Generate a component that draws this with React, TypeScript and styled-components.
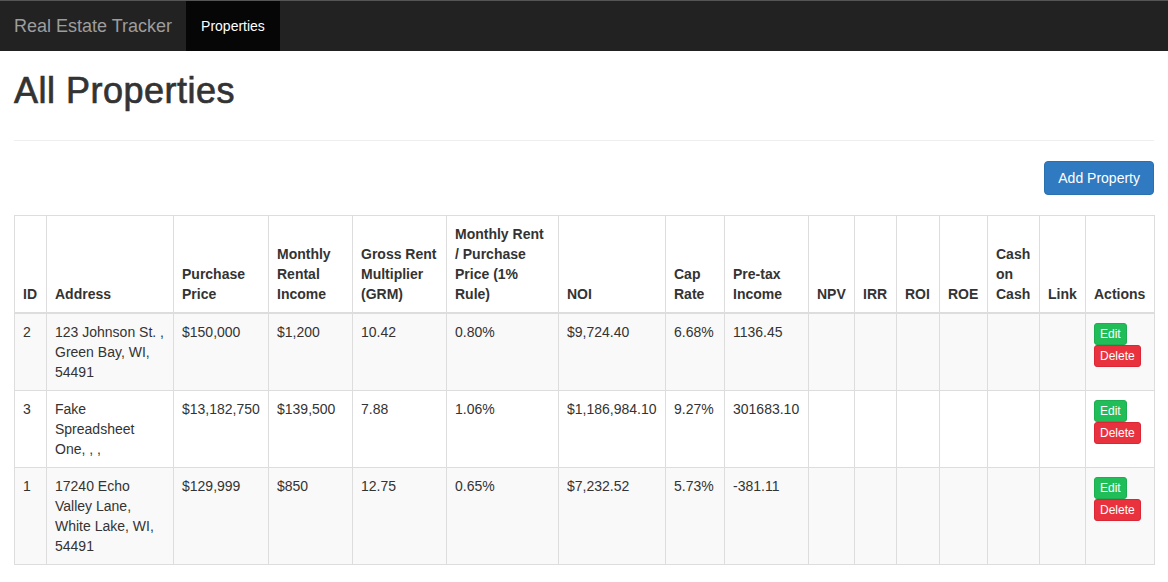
import React from "react";
import styled, { createGlobalStyle } from "styled-components";

const GlobalStyle = createGlobalStyle`
  html, body { margin: 0; padding: 0; background: #fff; }
  body {
    font-family: "Liberation Sans", Arial, Helvetica, sans-serif;
    font-size: 14px;
    line-height: 20px;
    color: #333;
  }
  * { box-sizing: border-box; }
`;

const Navbar = styled.nav`
  height: 51px;
  background: #222;
  border-top: 1px solid #555;
  display: flex;
  align-items: stretch;
`;

const Brand = styled.a`
  display: flex;
  align-items: center;
  padding: 0 14px 0 14px;
  font-size: 18px;
  color: #9d9d9d;
  text-decoration: none;
`;

const NavLink = styled.a<{ $active?: boolean }>`
  display: flex;
  align-items: center;
  padding: 0 15px;
  font-size: 14px;
  color: ${(p) => (p.$active ? "#fff" : "#9d9d9d")};
  background: ${(p) => (p.$active ? "#060606" : "transparent")};
  text-decoration: none;
`;

const Container = styled.main`
  width: 1140px;
  margin-left: 14px;
`;

const PageHeader = styled.div`
  padding-bottom: 29px;
  border-bottom: 1px solid #eee;
`;

const Title = styled.h1`
  margin: 20px 0 0;
  font-size: 36px;
  line-height: 40px;
  font-weight: normal;
  letter-spacing: 0.5px;
  -webkit-text-stroke: 0.7px #333;
  color: #333;
`;

const Toolbar = styled.div`
  display: flex;
  justify-content: flex-end;
  margin-top: 20px;
  margin-bottom: 20px;
`;

const PrimaryButton = styled.button`
  height: 34px;
  padding: 6px 13px;
  font-family: inherit;
  font-size: 14px;
  line-height: 20px;
  color: #fff;
  background: #2f7ac0;
  border: 1px solid #2a6fae;
  border-radius: 4px;
  cursor: pointer;
`;

const Table = styled.table`
  width: 1140px;
  table-layout: fixed;
  border-collapse: collapse;
  border: 1px solid #ddd;
`;

const Th = styled.th`
  padding: 8px;
  text-align: left;
  vertical-align: bottom;
  font-weight: bold;
  border: 1px solid #ddd;
  border-bottom: 2px solid #ddd;
  line-height: 20px;
`;

const Row = styled.tr<{ $striped?: boolean }>`
  background: ${(p) => (p.$striped ? "#f9f9f9" : "#fff")};
`;

const Td = styled.td`
  padding: 8px;
  vertical-align: top;
  border: 1px solid #ddd;
  line-height: 20px;
`;

const Actions = styled.div`
  display: flex;
  flex-direction: column;
  align-items: flex-start;
  gap: 0;
  padding-top: 1px;
`;

const SmallButton = styled.button<{ $variant: "success" | "danger" }>`
  height: 22px;
  padding: 1px 5px;
  font-family: inherit;
  font-size: 12px;
  line-height: 18px;
  color: #fff;
  border-radius: 3px;
  cursor: pointer;
  background: ${(p) => (p.$variant === "success" ? "#20bd59" : "#e8333f")};
  border: 1px solid ${(p) => (p.$variant === "success" ? "#1cae51" : "#dc2535")};
`;

const columns: { label: string; width: number }[] = [
  { label: "ID", width: 32 },
  { label: "Address", width: 127 },
  { label: "Purchase Price", width: 95 },
  { label: "Monthly Rental Income", width: 84 },
  { label: "Gross Rent Multiplier (GRM)", width: 94 },
  { label: "Monthly Rent / Purchase Price (1% Rule)", width: 112 },
  { label: "NOI", width: 107 },
  { label: "Cap Rate", width: 59 },
  { label: "Pre-tax Income", width: 84 },
  { label: "NPV", width: 46 },
  { label: "IRR", width: 42 },
  { label: "ROI", width: 43 },
  { label: "ROE", width: 48 },
  { label: "Cash on Cash", width: 52 },
  { label: "Link", width: 46 },
  { label: "Actions", width: 69 },
];

const rows = [
  {
    id: "2",
    address: "123 Johnson St. , Green Bay, WI, 54491",
    price: "$150,000",
    rent: "$1,200",
    grm: "10.42",
    pct: "0.80%",
    noi: "$9,724.40",
    cap: "6.68%",
    pretax: "1136.45",
  },
  {
    id: "3",
    address: "Fake Spreadsheet One, , ,",
    price: "$13,182,750",
    rent: "$139,500",
    grm: "7.88",
    pct: "1.06%",
    noi: "$1,186,984.10",
    cap: "9.27%",
    pretax: "301683.10",
  },
  {
    id: "1",
    address: "17240 Echo Valley Lane, White Lake, WI, 54491",
    price: "$129,999",
    rent: "$850",
    grm: "12.75",
    pct: "0.65%",
    noi: "$7,232.52",
    cap: "5.73%",
    pretax: "-381.11",
  },
];

export default function App() {
  return (
    <>
      <GlobalStyle />
      <Navbar>
        <Brand href="#">Real Estate Tracker</Brand>
        <NavLink href="#" $active>
          Properties
        </NavLink>
      </Navbar>
      <Container>
        <PageHeader>
          <Title>All Properties</Title>
        </PageHeader>
        <Toolbar>
          <PrimaryButton>Add Property</PrimaryButton>
        </Toolbar>
        <Table>
          <colgroup>
            {columns.map((c) => (
              <col key={c.label} style={{ width: c.width }} />
            ))}
          </colgroup>
          <thead>
            <tr>
              {columns.map((c) => (
                <Th key={c.label}>{c.label}</Th>
              ))}
            </tr>
          </thead>
          <tbody>
            {rows.map((r, i) => (
              <Row key={r.id} $striped={i % 2 === 0}>
                <Td>{r.id}</Td>
                <Td>{r.address}</Td>
                <Td>{r.price}</Td>
                <Td>{r.rent}</Td>
                <Td>{r.grm}</Td>
                <Td>{r.pct}</Td>
                <Td>{r.noi}</Td>
                <Td>{r.cap}</Td>
                <Td>{r.pretax}</Td>
                <Td />
                <Td />
                <Td />
                <Td />
                <Td />
                <Td />
                <Td>
                  <Actions>
                    <SmallButton $variant="success">Edit</SmallButton>
                    <SmallButton $variant="danger">Delete</SmallButton>
                  </Actions>
                </Td>
              </Row>
            ))}
          </tbody>
        </Table>
      </Container>
    </>
  );
}
